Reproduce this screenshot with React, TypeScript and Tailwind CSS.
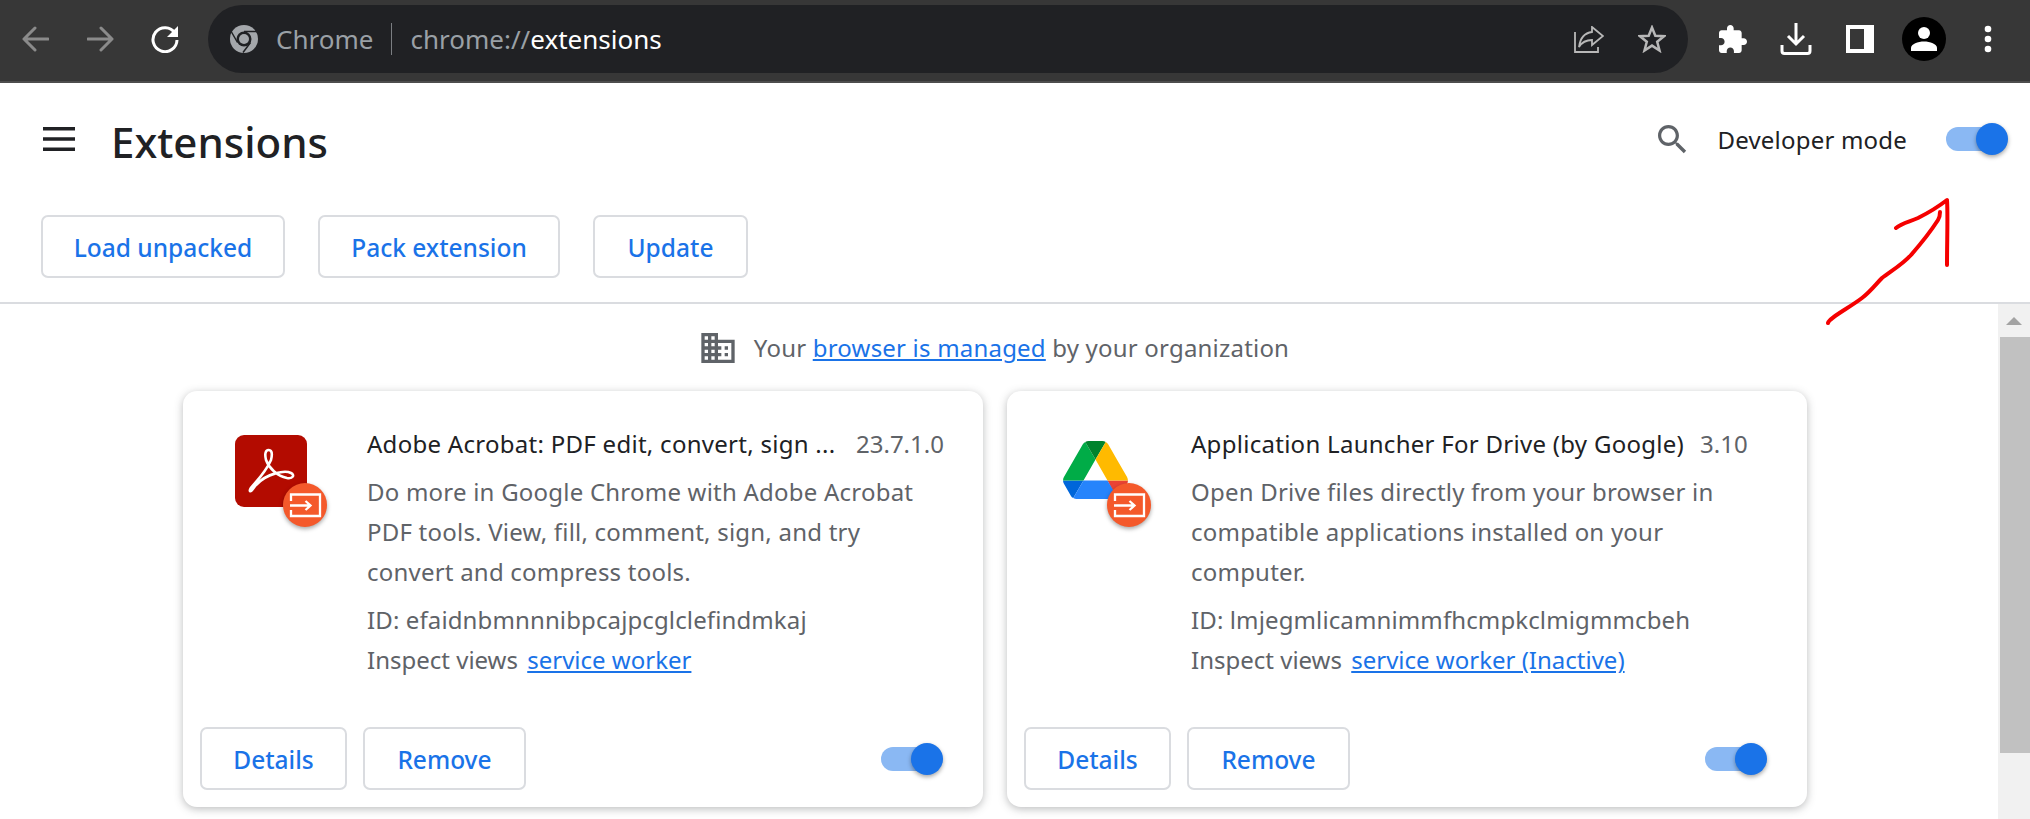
const drivePaths = [
  { d: "m6.6 66.85 3.85 6.65c.8 1.4 1.95 2.5 3.3 3.3l13.75-23.8h-27.5c0 1.55.4 3.1 1.2 4.5z", fill: "#0066da" },
  { d: "m43.65 25-13.75-23.8c-1.35.8-2.5 1.9-3.3 3.3l-25.4 44a9.06 9.06 0 0 0 -1.2 4.5h27.5z", fill: "#00ac47" },
  { d: "m73.55 76.8c1.35-.8 2.5-1.9 3.3-3.3l1.6-2.75 7.65-13.25c.8-1.4 1.2-2.95 1.2-4.5h-27.502l5.852 11.5z", fill: "#ea4335" },
  { d: "m43.65 25 13.75-23.8c-1.35-.8-2.9-1.2-4.5-1.2h-18.5c-1.6 0-3.15.45-4.5 1.2z", fill: "#00832d" },
  { d: "m59.8 53h-32.3l-13.75 23.8c1.35.8 2.9 1.2 4.5 1.2h50.8c1.6 0 3.15-.45 4.5-1.2z", fill: "#2684fc" },
  { d: "m73.4 26.5-12.7-22c-.8-1.4-1.95-2.5-3.3-3.3l-13.75 23.8 16.15 28h27.45c0-1.55-.4-3.1-1.2-4.5z", fill: "#ffba00" },
];

function AdobeIcon() {
  return (
    <div className="w-[72px] h-[72px] rounded-[9px] bg-[#b30b00] flex items-center justify-center">
      <svg viewBox="0 0 72 72" className="w-[72px] h-[72px]" fill="none" stroke="#fff" strokeWidth="2.6">
        <path d="M15 56C13 53 28 43 36 25C38 17 36 15 33.5 15C30.500 15 29.500 19 31 25C34 33 42 41 52 43C58 44 60 40 56 38C50 35 32 38 21 50C17 55 16 57 15 56Z" />
      </svg>
    </div>
  );
}

function DriveIcon() {
  return (
    <div className="w-[72px] h-[72px] flex items-start justify-center pt-[6px]">
      <svg viewBox="0 0 87.3 78" className="w-[65px] h-[58px]">
        {drivePaths.map((p) => (
          <path key={p.fill} d={p.d} fill={p.fill} />
        ))}
      </svg>
    </div>
  );
}

function InputBadge() {
  return (
    <div className="absolute left-[48px] top-[48px] w-[44px] h-[44px] rounded-full bg-[#f4592b] shadow-[0_2px_4px_rgba(0,0,0,0.35)]">
      <svg viewBox="0 0 44 44" className="w-[44px] h-[44px]" fill="none" stroke="#fff" strokeWidth="2.3">
        <path d="M8 18V11.500H37V33H8V27" />
        <path d="M7 22.500H27M22.500 18L27.500 22.500L22.500 27" />
      </svg>
    </div>
  );
}

function Toggle() {
  return (
    <div className="relative w-[62px] h-[32px] flex items-center shrink-0">
      <div className="w-[51px] h-[24px] rounded-full bg-[#8ab8f3]" />
      <div className="absolute right-0 top-0 w-[32px] h-[32px] rounded-full bg-[#1a73e8] shadow-[0_2px_4px_rgba(0,0,0,0.35)]" />
    </div>
  );
}

function OutlineButton({ label, width }: { label: string; width: string }) {
  return (
    <button className={`${width} h-[63px] pt-[3px] rounded-[7px] border-2 border-[#dadce0] bg-white text-[#1a73e8] text-[24.5px] font-medium`}>
      {label}
    </button>
  );
}

function ExtensionCard({
  icon,
  title,
  version,
  titleWidth,
  desc,
  id,
  link,
}: {
  icon: React.ReactNode;
  title: string;
  version: string;
  titleWidth: string;
  desc: string[];
  id: string;
  link: string;
}) {
  return (
    <div className="w-[800px] h-[416px] rounded-[14px] bg-white shadow-[0_2px_8px_rgba(60,64,67,0.35)] flex flex-col shrink-0">
      <div className="flex pt-[33px] pr-[41px]">
        <div className="relative w-[184px] pl-[52px] pt-[11px] shrink-0">
          <div className="relative w-[92px] h-[92px]">
            {icon}
            <InputBadge />
          </div>
        </div>
        <div className="flex-1 text-[24px] leading-[40px] text-[#5f6368]">
          <div className="flex gap-[16px] mb-[8px]">
            <span className={`${titleWidth} text-[#202124] whitespace-nowrap tracking-[0.28px]`}>{title}</span>
            <span className="whitespace-nowrap">{version}</span>
          </div>
          <div className="mb-[8px] tracking-[0.22px]">
            {desc.map((line) => (
              <div key={line} className="whitespace-nowrap">{line}</div>
            ))}
          </div>
          <div className="tracking-[0.12px]">{id}</div>
          <div>
            Inspect views <a className="text-[#1a73e8] underline ml-[3px]">{link}</a>
          </div>
        </div>
      </div>
      <div className="mt-auto flex items-center pl-[17px] pr-[40px] pb-[17px]">
        <div className="flex gap-[16px]">
          <OutlineButton label="Details" width="w-[147px]" />
          <OutlineButton label="Remove" width="w-[163px]" />
        </div>
        <div className="ml-auto">
          <Toggle />
        </div>
      </div>
    </div>
  );
}

export default function App() {
  return (
    <div className="relative w-[2030px] h-[819px] overflow-hidden bg-white font-['Noto_Sans',sans-serif]">
      {/* Browser toolbar */}
      <div className="h-[83px] pb-[3px] border-b-2 border-[#4d4d4d] bg-[#373737] flex items-center box-border">
        <svg viewBox="0 0 27 26" className="w-[27px] h-[26px] ml-[22px]" fill="none" stroke="#8b8b8b" strokeWidth="3" strokeLinecap="round" strokeLinejoin="round">
          <path d="M26 13H2M13 2L2 13L13 24" />
        </svg>
        <svg viewBox="0 0 27 26" className="w-[27px] h-[26px] ml-[38px]" fill="none" stroke="#8b8b8b" strokeWidth="3" strokeLinecap="round" strokeLinejoin="round">
          <path d="M1 13H25M14 2L25 13L14 24" />
        </svg>
        <svg viewBox="0 0 28 28" className="w-[28px] h-[28px] ml-[37px]" fill="none">
          <path d="M24 8A12 12 0 1 0 26 15" stroke="#fff" strokeWidth="3" />
          <path d="M27 1V12H16Z" fill="#fff" />
        </svg>
        <div className="ml-[29px] w-[1480px] h-[68px] rounded-full bg-[#202124] flex items-center pl-[22px] pr-[22px] shrink-0">
          <svg viewBox="0 0 28 28" className="w-[28px] h-[28px] shrink-0">
            <circle cx="14" cy="14" r="14" fill="#a4a7ab" />
            <circle cx="14" cy="14" r="7.500" fill="#202124" />
            <circle cx="14" cy="14" r="5" fill="#a4a7ab" />
            <path d="M14 6.500H27M7.500 17.500L1.500 7M20.500 17.500L13 27.500" stroke="#202124" strokeWidth="1.500" />
          </svg>
          <span className="ml-[18px] text-[26px] text-[#9aa0a6]">Chrome</span>
          <div className="ml-[18px] w-[1px] h-[32px] bg-[#7b7e82]" />
          <span className="ml-[18px] text-[26px] text-[#9aa0a6]">
            chrome://<span className="text-white">extensions</span>
          </span>
          <svg viewBox="0 0 30 27" className="ml-auto w-[30px] h-[27px]" fill="none" stroke="#b8b8b8" strokeWidth="1.800">
            <path d="M1 6V26H24V21" />
            <path d="M18 1L29 10L18 19V14C12 14 8 16 5 21C6 13 10 7 18 6Z" />
          </svg>
          <svg viewBox="0 0 28 28" className="ml-[34px] w-[28px] h-[28px]" fill="none" stroke="#b8b8b8" strokeWidth="2.500">
            <path d="M14 2.500L17.300 10.800L26 11.200L19.200 16.800L21.500 25.500L14 20.600L6.500 25.500L8.800 16.800L2 11.200L10.700 10.800Z" />
          </svg>
        </div>
        <svg viewBox="2 1 21 21" className="ml-[31px] w-[28px] h-[28px]" fill="#fff">
          <path d="M20.5 11H19V7c0-1.100-.9-2-2-2h-4V3.500C13 2.120 11.880 1 10.500 1S8 2.120 8 3.500V5H4c-1.100 0-1.990.9-1.990 2v3.800H3.500c1.490 0 2.700 1.210 2.700 2.700s-1.210 2.700-2.700 2.700H2V20c0 1.100.9 2 2 2h3.800v-1.500c0-1.490 1.210-2.700 2.700-2.700 1.490 0 2.700 1.210 2.700 2.700V22H17c1.100 0 2-.9 2-2v-4h1.500c1.380 0 2.500-1.120 2.500-2.500S21.880 11 20.500 11z" />
        </svg>
        <svg viewBox="0 0 32 32" className="ml-[33px] w-[32px] h-[32px]" fill="none" stroke="#fff" strokeWidth="3">
          <path d="M16 0V21M8 13L16 21L24 13" />
          <path d="M2 22V28Q2 30.500 4.500 30.500H27.500Q30 30.500 30 28V22" />
        </svg>
        <svg viewBox="0 0 28 28" className="ml-[34px] w-[28px] h-[28px]">
          <rect width="28" height="28" fill="#fff" />
          <rect x="4" y="4" width="14" height="20" fill="#373737" />
        </svg>
        <svg viewBox="0 0 44 44" className="ml-[28px] w-[44px] h-[44px]">
          <circle cx="22" cy="22" r="22" fill="#000" />
          <circle cx="22" cy="16" r="6" fill="#fff" />
          <path d="M9 34V31C9 27 16 24.500 22 24.500C28 24.500 35 27 35 31V34Z" fill="#fff" />
        </svg>
        <svg viewBox="0 0 8 28" className="ml-[38px] w-[8px] h-[28px]" fill="#fff">
          <circle cx="4" cy="4" r="3.300" />
          <circle cx="4" cy="14" r="3.300" />
          <circle cx="4" cy="24" r="3.300" />
        </svg>
      </div>

      {/* Page header */}
      <div className="h-[221px] border-b-2 border-[#dadce0] box-border">
        <div className="h-[112px] flex items-center pl-[43px] pr-[22px]">
          <svg viewBox="0 0 32 24" className="w-[32px] h-[24px]" fill="#202124">
            <rect width="32" height="3.500" />
            <rect y="10.250" width="32" height="3.500" />
            <rect y="20.500" width="32" height="3.500" />
          </svg>
          <h1 className="ml-[36px] text-[42px] font-medium text-[#202124] leading-none pt-[6px]">Extensions</h1>
          <svg viewBox="3 3 18 18" className="ml-auto w-[29px] h-[29px]" fill="#5f6368">
            <path d="M15.500 14h-.79l-.28-.27C15.410 12.590 16 11.110 16 9.500 16 5.910 13.090 3 9.500 3S3 5.910 3 9.500 5.910 16 9.500 16c1.610 0 3.090-.59 4.230-1.570l.27.28v.79l5 4.990L20.490 19l-4.990-5zm-6 0C7.010 14 5 11.990 5 9.500S7.010 5 9.500 5 14 7.010 14 9.500 11.990 14 9.500 14z" />
          </svg>
          <span className="ml-[30px] pt-[2px] text-[24px] tracking-[0.2px] text-[#202124]">Developer mode</span>
          <div className="ml-[39px]">
            <Toggle />
          </div>
        </div>
        <div className="mt-[20px] pl-[41px] flex gap-[33px]">
          <OutlineButton label="Load unpacked" width="w-[244px]" />
          <OutlineButton label="Pack extension" width="w-[242px]" />
          <OutlineButton label="Update" width="w-[155px]" />
        </div>
      </div>

      {/* Content + scrollbar */}
      <div className="flex h-[515px]">
        <div className="flex-1 pl-[183px]">
          <div className="w-[1624px] h-[87px] flex items-center justify-center text-[24px] tracking-[0.2px] text-[#5f6368]">
            <svg viewBox="2 3 20 18" className="w-[34px] h-[30px] mr-[19px]" fill="#5f6368">
              <path d="M12 7V3H2v18h20V7H12zM6 19H4v-2h2v2zm0-4H4v-2h2v2zm0-4H4V9h2v2zm0-4H4V5h2v2zm4 12H8v-2h2v2zm0-4H8v-2h2v2zm0-4H8V9h2v2zm0-4H8V5h2v2zm10 12h-8v-2h2v-2h-2v-2h2v-2h-2V9h8v10zm-2-8h-2v2h2v-2zm0 4h-2v2h2v-2z" />
            </svg>
            <span>
              Your <a className="text-[#1a73e8] underline">browser is managed</a> by your organization
            </span>
          </div>
          <div className="flex gap-[24px]">
            <ExtensionCard
              icon={<AdobeIcon />}
              title="Adobe Acrobat: PDF edit, convert, sign ..."
              titleWidth="w-[473px]"
              version="23.7.1.0"
              desc={[
                "Do more in Google Chrome with Adobe Acrobat",
                "PDF tools. View, fill, comment, sign, and try",
                "convert and compress tools.",
              ]}
              id="ID: efaidnbmnnnibpcajpcglclefindmkaj"
              link="service worker"
            />
            <ExtensionCard
              icon={<DriveIcon />}
              title="Application Launcher For Drive (by Google)"
              titleWidth=""
              version="3.10"
              desc={[
                "Open Drive files directly from your browser in",
                "compatible applications installed on your",
                "computer.",
              ]}
              id="ID: lmjegmlicamnimmfhcmpkclmigmmcbeh"
              link="service worker (Inactive)"
            />
          </div>
        </div>
        <div className="w-[32px] bg-[#f1f1f1] flex flex-col items-end">
          <div className="h-[33px] w-[32px] flex items-center justify-center">
            <div className="w-0 h-0 border-l-[8px] border-r-[8px] border-b-[8px] border-l-transparent border-r-transparent border-b-[#a3a3a3]" />
          </div>
          <div className="w-[30px] h-[416px] bg-[#c1c1c1]" />
        </div>
      </div>

      {/* Hand-drawn arrow annotation */}
      <svg viewBox="0 0 160 140" className="absolute left-[1805px] top-[192px] w-[160px] h-[140px]" fill="none" stroke="#f50000" strokeWidth="4" strokeLinecap="round" strokeLinejoin="round">
        <path d="M23 131C24 126 44 116 57 106C66 99 70 93 77 86C86 79 97 73 106 63C113 55 124 42 133 28C135 25 135 22 135 20" />
        <path d="M91 36C97 31 104 30 113 26C123 21 133 15 142 8C143 23 142 48 142 73" />
      </svg>
    </div>
  );
}
